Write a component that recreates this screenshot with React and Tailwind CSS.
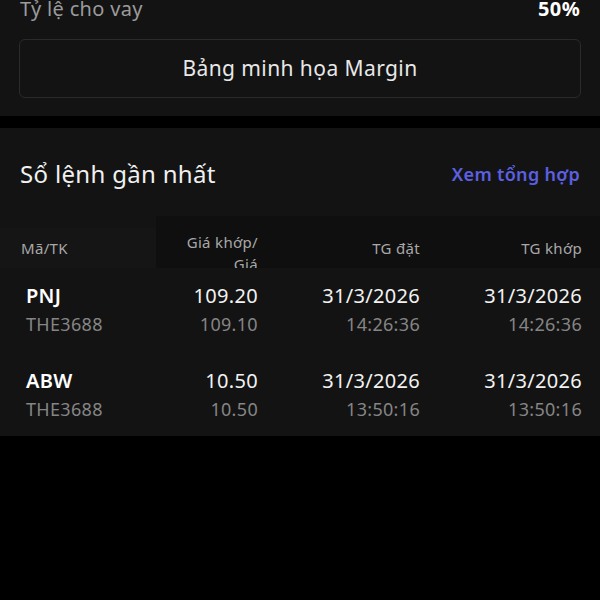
import React from "react";

const orders = [
  { code: "PNJ", acc: "THE3688", match: "109.20", price: "109.10", date: "31/3/2026", placed: "14:26:36", matched: "14:26:36" },
  { code: "ABW", acc: "THE3688", match: "10.50", price: "10.50", date: "31/3/2026", placed: "13:50:16", matched: "13:50:16" },
];

const App = () => {
  return (
    <div
      className="w-[600px] h-[600px] overflow-hidden bg-black text-white tracking-[0.02em]"
      style={{ fontFamily: '"Noto Sans", "Open Sans", sans-serif' }}
    >
      {/* Margin card */}
      <div className="bg-[#131313] h-[116px] px-[19px] flex flex-col">
        <div className="flex items-center justify-between h-[28px] -mt-[5px] px-px">
          <span className="text-[20px] text-[#9b9b9b]">Tỷ lệ cho vay</span>
          <span className="text-[20px] font-bold text-white">50%</span>
        </div>
        <button className="mt-[16px] h-[59px] w-full rounded-md border-[1.5px] border-[#2b2b2b] text-[21px] text-[#e8e8e8] tracking-[0.02em]">
          Bảng minh họa Margin
        </button>
      </div>

      {/* Recent orders */}
      <div className="mt-[12px] bg-[#131313] h-[308px] flex flex-col overflow-hidden">
        <div className="flex items-center justify-between px-[20px] h-[36px] mt-[28px]">
          <span className="text-[24px] text-[#f0f0f0]">Sổ lệnh gần nhất</span>
          <span className="text-[18px] font-semibold text-[#5b5fe0]">Xem tổng hợp</span>
        </div>

        {/* header */}
        <div className="flex mt-[24px] h-[52px] text-[15px] leading-[22px] text-[#a8a8a8]">
          <div className="w-[156px] mt-[12px] pl-[21px] pt-[9px] bg-[#151515]">Mã/TK</div>
          <div className="w-[102px] bg-[#0f0f0f] overflow-hidden text-right pt-[15px]">
            <div>Giá khớp/</div>
            <div>Giá</div>
          </div>
          <div className="w-[162px] bg-[#0f0f0f] text-right pt-[21px]">TG đặt</div>
          <div className="w-[162px] bg-[#0f0f0f] text-right pt-[21px]">TG khớp</div>
          <div className="flex-1 bg-[#0f0f0f]" />
        </div>

        {/* rows */}
        <div className="flex flex-col">
          {orders.map((o) => (
            <div key={o.code} className="flex pl-[20px] h-[85px] pt-[14px] shrink-0">
              <div className="w-[140px] pl-[6px] flex flex-col">
                <span className="text-[20px] font-semibold leading-[28px] text-white">{o.code}</span>
                <span className="text-[18px] leading-[28px] text-[#858585]">{o.acc}</span>
              </div>
              <div className="w-[98px] flex flex-col items-end">
                <span className="text-[20px] leading-[28px] text-[#f2f2f2]">{o.match}</span>
                <span className="text-[18px] leading-[28px] text-[#858585]">{o.price}</span>
              </div>
              <div className="w-[162px] flex flex-col items-end">
                <span className="text-[20px] leading-[28px] text-[#f2f2f2]">{o.date}</span>
                <span className="text-[18px] leading-[28px] text-[#858585]">{o.placed}</span>
              </div>
              <div className="w-[162px] flex flex-col items-end">
                <span className="text-[20px] leading-[28px] text-[#f2f2f2]">{o.date}</span>
                <span className="text-[18px] leading-[28px] text-[#858585]">{o.matched}</span>
              </div>
            </div>
          ))}
        </div>
      </div>
    </div>
  );
};

export default App;
